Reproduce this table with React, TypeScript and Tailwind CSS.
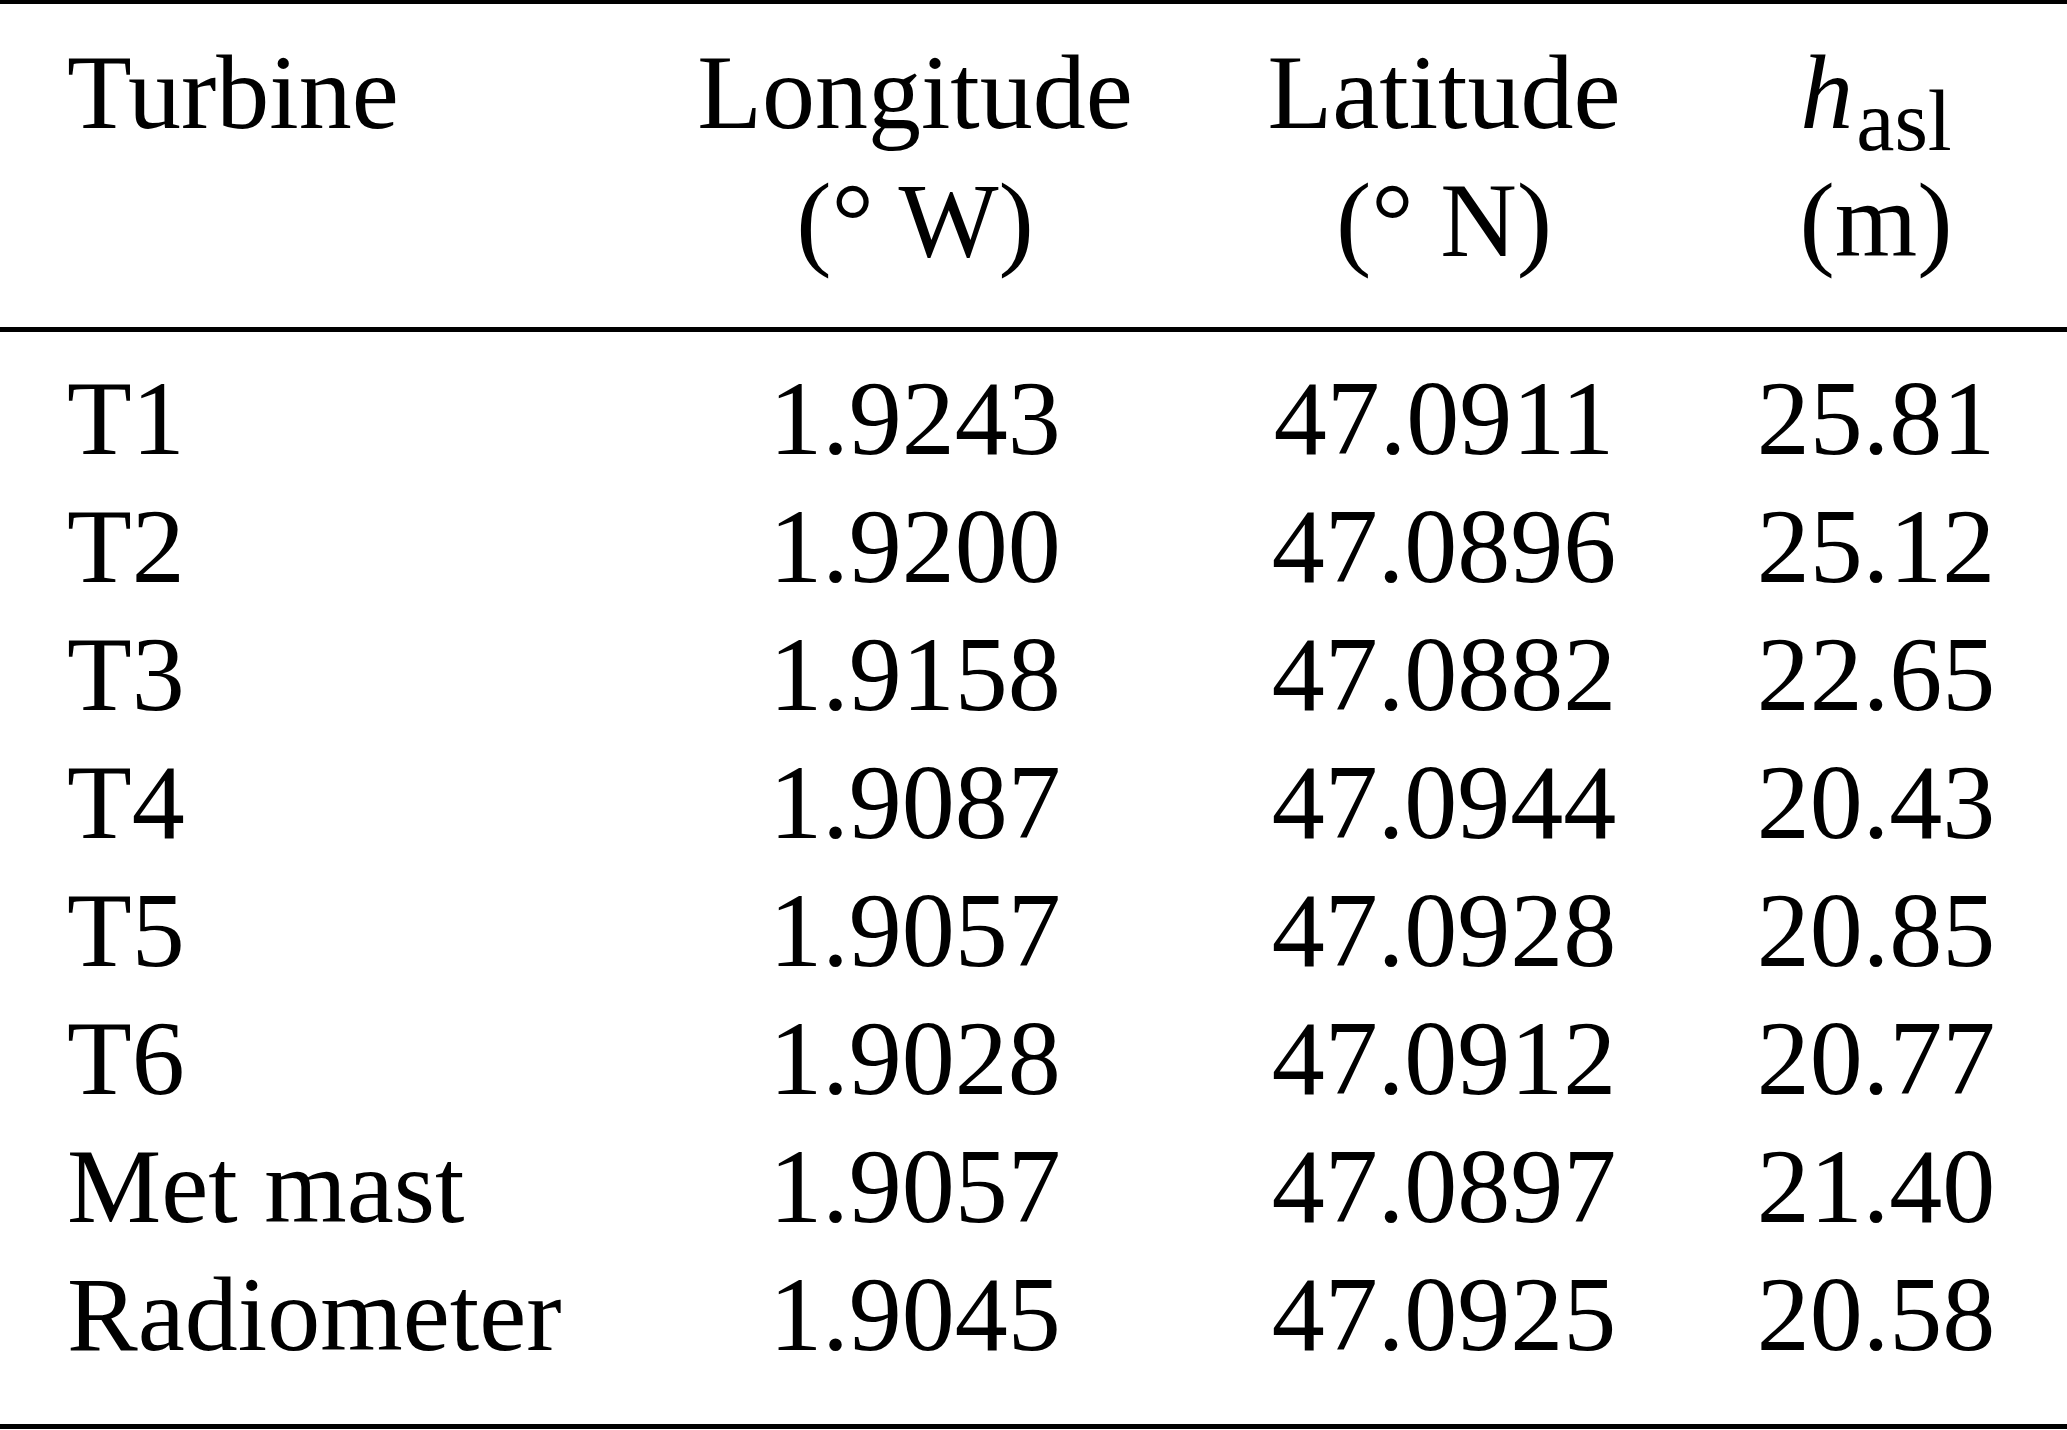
import React from "react";

const rows: [string, string, string, string][] = [
  ["T1", "1.9243", "47.0911", "25.81"],
  ["T2", "1.9200", "47.0896", "25.12"],
  ["T3", "1.9158", "47.0882", "22.65"],
  ["T4", "1.9087", "47.0944", "20.43"],
  ["T5", "1.9057", "47.0928", "20.85"],
  ["T6", "1.9028", "47.0912", "20.77"],
  ["Met mast", "1.9057", "47.0897", "21.40"],
  ["Radiometer", "1.9045", "47.0925", "20.58"],
];

const grid = "grid grid-cols-[682px_466px_592px_272px_1fr]";

export default function App() {
  return (
    <div
      className="w-[2067px] h-[1430px] bg-white text-black text-[106px] leading-[128px] whitespace-pre"
      style={{ fontFamily: '"Liberation Serif", "Times New Roman", serif' }}
    >
      <div className="h-[4px] bg-black" />
      <div className={`${grid} pt-[25px] pb-[42px]`}>
        <div className="pl-[67px]">
          <div className="h-[128px]">Turbine</div>
          <div className="h-[128px]" />
        </div>
        <div className="text-center">
          <div className="h-[128px]">Longitude</div>
          <div className="h-[128px]">(° W)</div>
        </div>
        <div className="text-center">
          <div className="h-[128px]">Latitude</div>
          <div className="h-[128px]">(° N)</div>
        </div>
        <div className="text-center">
          <div className="h-[128px]">
            <i>h</i>
            <sub className="text-[86px] -bottom-[22px] ml-[3px]">asl</sub>
          </div>
          <div className="h-[128px]">(m)</div>
        </div>
        <div />
      </div>
      <div className="h-[5px] bg-black" />
      <div className="pt-[23px] pb-[45px]">
        {rows.map((r) => (
          <div key={r[0]} className={`${grid} h-[128px]`}>
            <div className="pl-[67px]">{r[0]}</div>
            <div className="text-center">{r[1]}</div>
            <div className="text-center">{r[2]}</div>
            <div className="text-center">{r[3]}</div>
            <div />
          </div>
        ))}
      </div>
      <div className="h-[5px] bg-black" />
    </div>
  );
}
